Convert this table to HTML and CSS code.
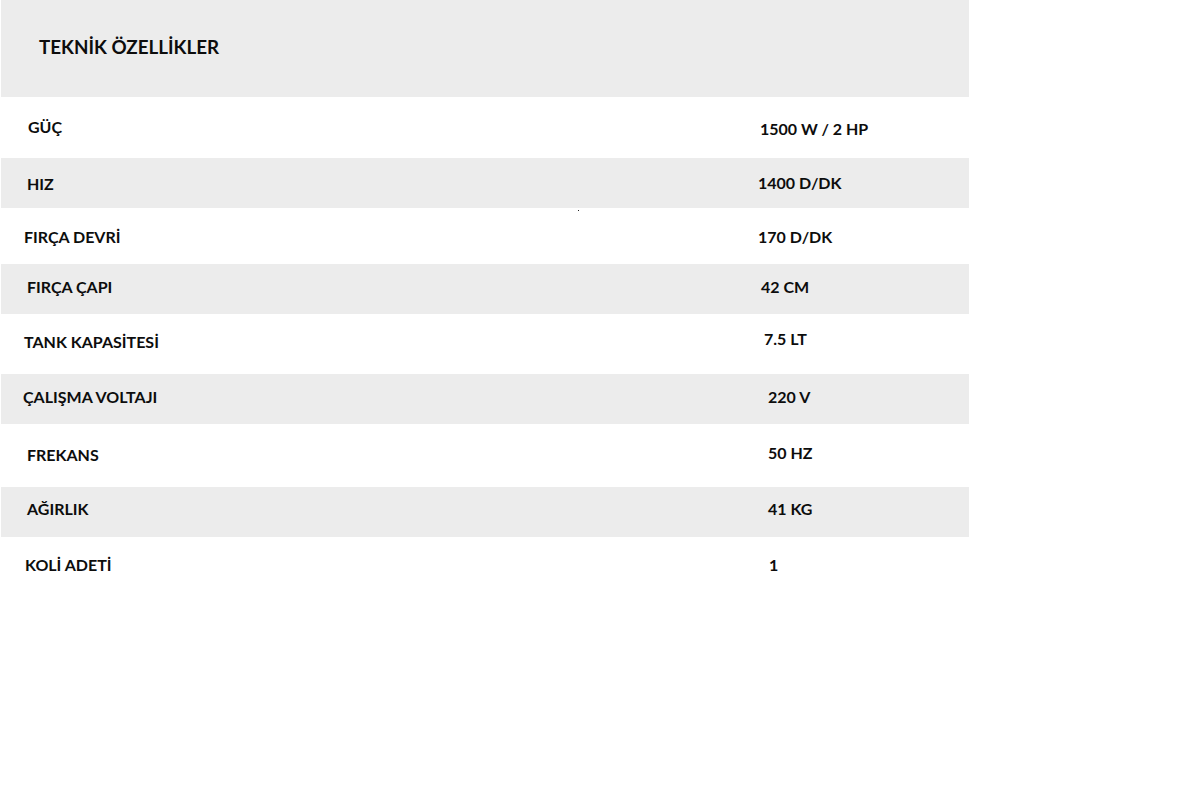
FILE: index.html
```html
<!DOCTYPE html>
<html lang="tr">
<head>
<meta charset="utf-8">
<title>Teknik Özellikler</title>
<link rel="stylesheet" href="styles.css">
</head>
<body>
<div class="specs">
  <div class="specs-head"><h2 class="specs-title">TEKNİK ÖZELLİKLER</h2></div>
  <div class="row r1"><span class="label">GÜÇ</span><span class="value">1500 W / 2 HP</span></div>
  <div class="row gray r2"><span class="label">HIZ</span><span class="value">1400 D/DK</span></div>
  <div class="row r3"><span class="label">FIRÇA DEVRİ</span><span class="value">170 D/DK</span><i class="speck"></i></div>
  <div class="row gray r4"><span class="label">FIRÇA ÇAPI</span><span class="value">42 CM</span></div>
  <div class="row r5"><span class="label">TANK KAPASİTESİ</span><span class="value">7.5 LT</span></div>
  <div class="row gray r6"><span class="label">ÇALIŞMA VOLTAJI</span><span class="value">220 V</span></div>
  <div class="row r7"><span class="label">FREKANS</span><span class="value">50 HZ</span></div>
  <div class="row gray r8"><span class="label">AĞIRLIK</span><span class="value">41 KG</span></div>
  <div class="row r9"><span class="label">KOLİ ADETİ</span><span class="value">1</span></div>
</div>
</body>
</html>
```
FILE: styles.css
```css
html, body {
  margin: 0;
  padding: 0;
  background: #ffffff;
}
body {
  font-family: Lato, "Open Sans", "Liberation Sans", sans-serif;
  color: #0d0d0d;
}
.specs {
  width: 968px;
  margin-left: 1px;
}
.specs-head {
  height: 97px;
  background: #ececec;
  display: flex;
  align-items: center;
  padding-left: 38px;
  box-sizing: border-box;
}
.specs-title {
  margin: 0;
  font-size: 18.8px;
  font-weight: 700;
  line-height: 1;
  padding-bottom: 2px;
}
.row {
  position: relative;
  display: flex;
  align-items: center;
  font-size: 16px;
  font-weight: 700;
  line-height: 1;
}
.row.gray { background: #ececec; }
.label { flex: 0 0 auto; position: relative; }
.value { position: relative; }
.speck {
  position: absolute;
  left: 577px;
  top: 2px;
  width: 1px;
  height: 1px;
  background: #222;
}
.r1 { height: 61px; }
.r1 .label { margin-left: 27px; width: 732px; top: -1px; }
.r1 .value { top: 1px; }
.r2 { height: 50px; }
.r2 .label { margin-left: 26px; width: 731px; top: 1px; }
.r3 { height: 56px; }
.r3 .label { margin-left: 23px; width: 734px; top: 1px; }
.r3 .value { top: 1px; }
.r4 { height: 50px; }
.r4 .label { margin-left: 26px; width: 734px; top: -2px; }
.r4 .value { top: -2px; }
.r5 { height: 60px; }
.r5 .label { margin-left: 23px; width: 740px; top: -2px; }
.r5 .value { top: -5px; }
.r6 { height: 50px; }
.r6 .label { margin-left: 22px; width: 745px; top: -2px; }
.r6 .value { top: -2px; }
.r7 { height: 63px; }
.r7 .label { margin-left: 26px; width: 741px; top: -1px; }
.r7 .value { top: -3px; }
.r8 { height: 50px; }
.r8 .label { margin-left: 26px; width: 741px; top: -3px; }
.r8 .value { top: -3px; }
.r9 { height: 56px; }
.r9 .label { margin-left: 24px; width: 744px; }
```
